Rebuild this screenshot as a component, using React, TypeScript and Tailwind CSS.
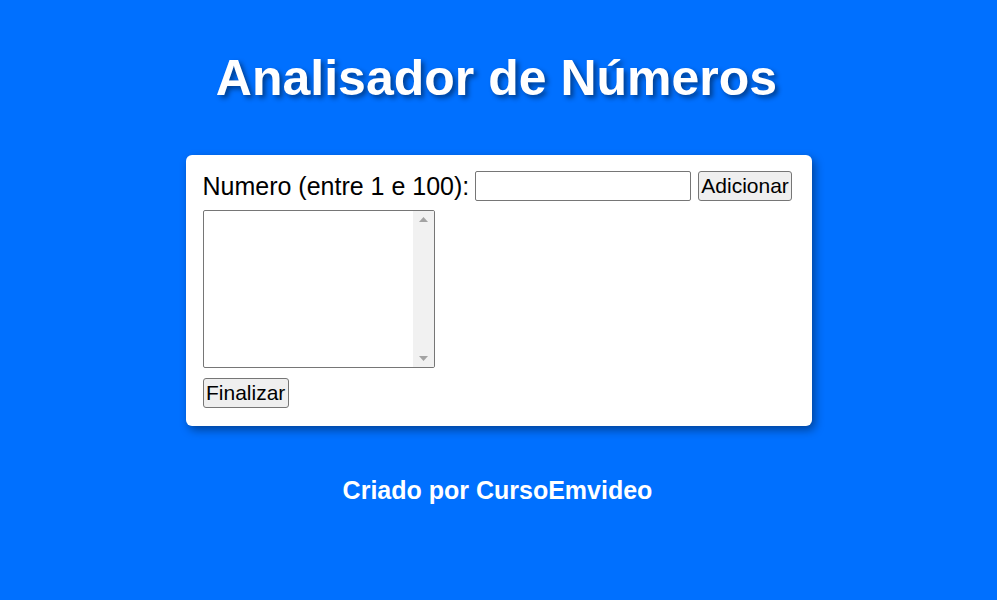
export default function App() {
    return (
        <div className="min-h-[600px] w-full bg-[#0070ff] pt-[49px] font-['Liberation_Sans',Arial,sans-serif]">
            <h1 className="pr-[4px] text-center text-[50px] leading-[58px] font-bold text-white [text-shadow:3px_3px_5px_rgba(0,0,0,0.45)]">
                Analisador de Números
            </h1>

            <div className="mx-auto mt-[48px] w-[626px] rounded-[6px] bg-white pr-[17px] pl-[17px] pt-[16px] pb-[18px] shadow-[3px_4px_10px_rgba(0,0,0,0.4)]">
                <div className="flex h-[30px] items-center">
                    <span className="text-[25px] leading-[28px] text-black">Numero (entre 1 e 100):</span>
                    <input
                        type="text"
                        className="ml-[6px] h-[30px] w-[216px] rounded-[2px] border border-[#767676] bg-white px-1 text-[21px] outline-none"
                    />
                    <button className="ml-[7px] h-[30px] rounded-[3px] border border-[#767676] bg-[#efefef] px-[2px] text-[21px] leading-[24px] text-black">
                        Adicionar
                    </button>
                </div>

                <div className="mt-[9px] flex h-[158px] w-[232px] overflow-hidden rounded-[2px] border border-[#767676] bg-white">
                    <div className="flex-1" />
                    <div className="flex w-[21px] flex-col items-center justify-between bg-[#f1f1f1] py-[6px]">
                        <svg width="9" height="5" viewBox="0 0 9 5">
                            <path d="M0 5 L4.5 0 L9 5 Z" fill="#a3a3a3" />
                        </svg>
                        <svg width="9" height="5" viewBox="0 0 9 5">
                            <path d="M0 0 L4.5 5 L9 0 Z" fill="#a3a3a3" />
                        </svg>
                    </div>
                </div>

                <button className="mt-[10px] h-[30px] rounded-[3px] border border-[#767676] bg-[#efefef] px-[2.5px] text-[21px] leading-[24px] text-black">
                    Finalizar
                </button>
            </div>

            <p className="mt-[50px] pr-[2px] text-center text-[25px] leading-[29px] font-bold text-white">
                Criado por CursoEmvideo
            </p>
        </div>
    )
}
